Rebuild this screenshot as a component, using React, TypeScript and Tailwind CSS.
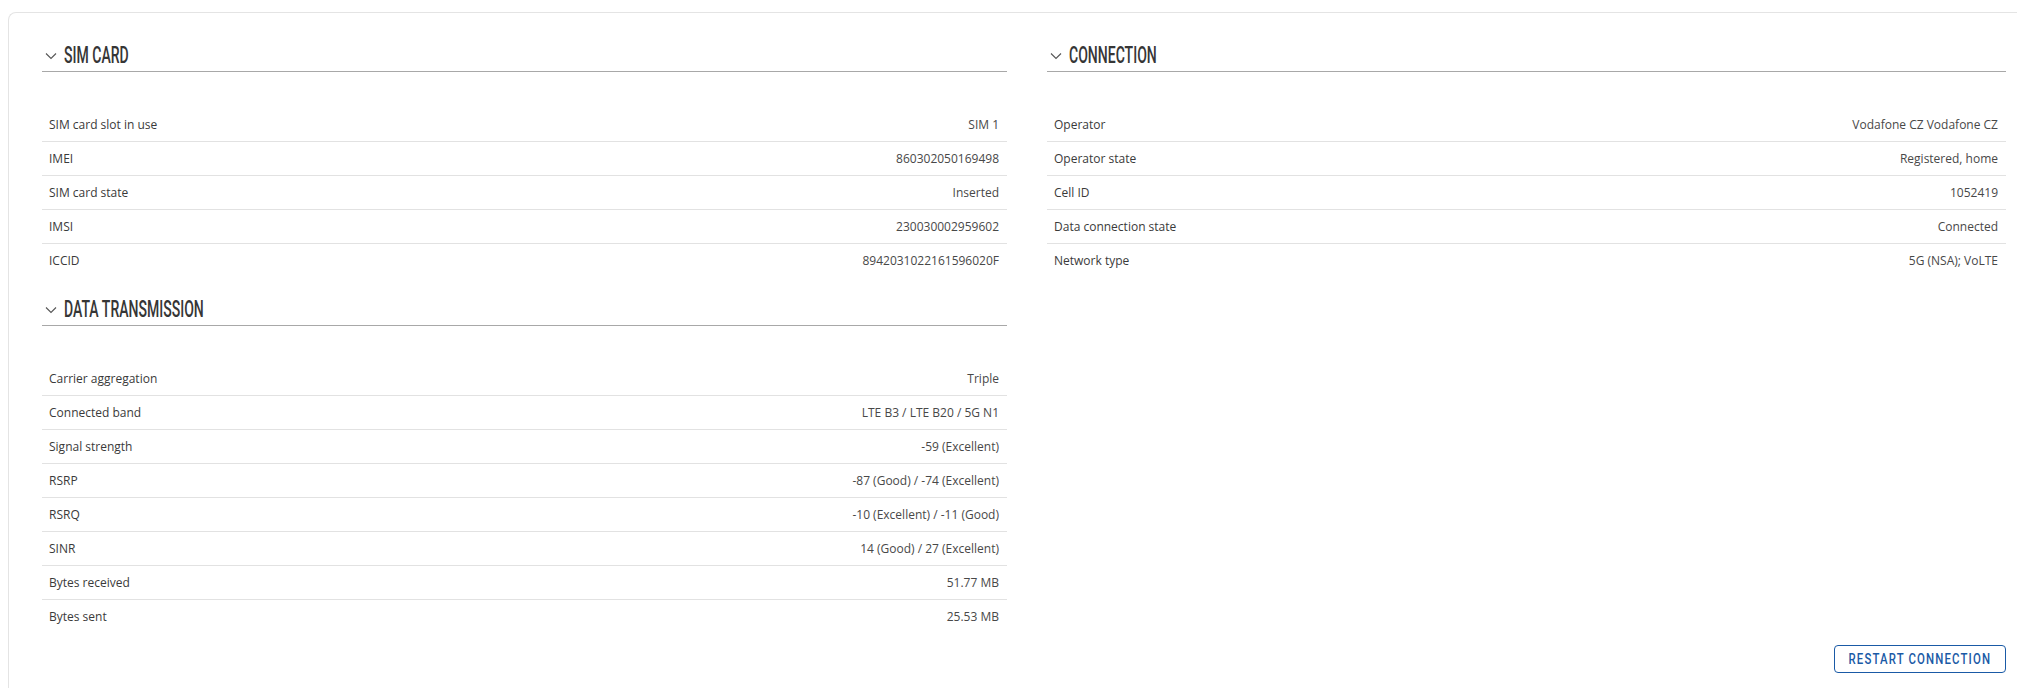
import React from 'react'

type Row = { label: string; value: string }

const simCard: Row[] = [
  { label: 'SIM card slot in use', value: 'SIM 1' },
  { label: 'IMEI', value: '860302050169498' },
  { label: 'SIM card state', value: 'Inserted' },
  { label: 'IMSI', value: '230030002959602' },
  { label: 'ICCID', value: '8942031022161596020F' },
]

const dataTransmission: Row[] = [
  { label: 'Carrier aggregation', value: 'Triple' },
  { label: 'Connected band', value: 'LTE B3 / LTE B20 / 5G N1' },
  { label: 'Signal strength', value: '-59 (Excellent)' },
  { label: 'RSRP', value: '-87 (Good) / -74 (Excellent)' },
  { label: 'RSRQ', value: '-10 (Excellent) / -11 (Good)' },
  { label: 'SINR', value: '14 (Good) / 27 (Excellent)' },
  { label: 'Bytes received', value: '51.77 MB' },
  { label: 'Bytes sent', value: '25.53 MB' },
]

const connection: Row[] = [
  { label: 'Operator', value: 'Vodafone CZ Vodafone CZ' },
  { label: 'Operator state', value: 'Registered, home' },
  { label: 'Cell ID', value: '1052419' },
  { label: 'Data connection state', value: 'Connected' },
  { label: 'Network type', value: '5G (NSA); VoLTE' },
]

// thin chevron next to each section title
const Chevron = () => (
  <svg width="12" height="8" viewBox="0 0 12 8" fill="none" className="ml-[3px] shrink-0">
    <path d="M1 1.5 L6 6.5 L11 1.5" stroke="#555" strokeWidth="1.1" />
  </svg>
)

const Section: React.FC<{ title: string; rows: Row[]; className?: string }> = ({
  title,
  rows,
  className,
}) => (
  <section className={className}>
    <div className="flex h-[32px] items-center gap-[7px] border-b border-[#a8a8a8]">
      <Chevron />
      <h2 className="inline-block origin-left scale-x-[0.61] whitespace-nowrap font-['Roboto',sans-serif] text-[23px] font-medium uppercase leading-none text-[#363636]">
        {title}
      </h2>
    </div>
    <div className="mt-[36px]">
      {rows.map((row, i) => (
        <div
          key={row.label}
          className={
            'flex h-[34px] items-center justify-between pl-[7px] pr-[8px] text-[12px] ' +
            (i < rows.length - 1 ? 'border-b border-[#e2e2e2]' : '')
          }
        >
          <span className="text-[#3a3a3a]">{row.label}</span>
          <span className="text-[#484848]">{row.value}</span>
        </div>
      ))}
    </div>
  </section>
)

const App: React.FC = () => {
  return (
    <div className="min-h-screen overflow-hidden bg-white pl-[8px] pt-[12px] font-['Open_Sans',sans-serif]">
      <div className="w-[2040px] rounded-tl-[8px] border-l border-t border-[#e4e4e4] pb-[20px] pl-[33px] pt-[27px]">
        <div className="grid w-[1964px] grid-cols-[965px_959px] gap-x-[40px]">
          <div>
            <Section title="SIM card" rows={simCard} />
            <Section title="Data transmission" rows={dataTransmission} className="mt-[16px]" />
          </div>
          <div>
            <Section title="Connection" rows={connection} />
          </div>
        </div>
        <div className="mt-[11px] flex w-[1964px] justify-end">
          <button className="flex h-[28px] w-[172px] items-center justify-center rounded-[4px] border border-[#1a5aa6] text-[#1a5aa6]">
            <span className="inline-block scale-x-[0.76] whitespace-nowrap font-['Roboto',sans-serif] text-[15px] font-medium uppercase tracking-[1.5px]">
              Restart connection
            </span>
          </button>
        </div>
      </div>
    </div>
  )
}

export default App
